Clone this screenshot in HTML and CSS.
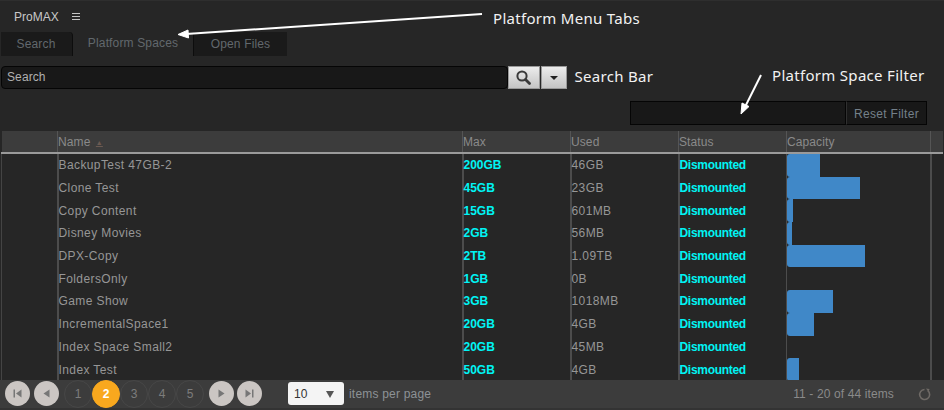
FILE: index.html
```html
<!DOCTYPE html>
<html lang="en">
<head>
    <meta charset="UTF-8">
    <title>ProMAX Platform Spaces</title>
    <link rel="stylesheet" href="styles.css">
</head>
<body>
    <div id="app">
        <div class="topbar">
            <span class="brand">ProMAX</span>
            <span class="menu-icon"><i></i><i></i><i></i></span>
        </div>
        <div class="tabs">
            <div class="tab tab-search">Search</div>
            <div class="tab tab-active">Platform Spaces</div>
            <div class="tab tab-files">Open Files</div>
        </div>
        <div class="searchbar">
            <div class="search-input">Search</div>
            <div class="light-btn btn-search">
                <svg width="17" height="17" viewBox="0 0 17 17"><circle cx="7" cy="7" r="4.6" fill="none" stroke="#3a3a3a" stroke-width="2"/><path d="M10.500 10.500l4 4" stroke="#3a3a3a" stroke-width="2.800" stroke-linecap="round"/></svg>
            </div>
            <div class="light-btn btn-drop"><span class="caret"></span></div>
            <span class="note note-search">Search Bar</span>
        </div>
        <div class="filterbar">
            <div class="filter-input"></div>
            <div class="filter-reset">Reset Filter</div>
        </div>
        <table class="grid">
            <colgroup>
                <col class="c-first"><col class="c-name"><col class="c-num"><col class="c-num"><col class="c-num"><col class="c-cap"><col>
            </colgroup>
            <thead>
                <tr><th></th><th>Name <span class="sort">▲</span></th><th>Max</th><th>Used</th><th>Status</th><th>Capacity</th><th></th></tr>
            </thead>
            <tbody>
                <tr><td></td><td>BackupTest 47GB-2</td><td class="hi">200GB</td><td>46GB</td><td class="hi st">Dismounted</td><td class="cap"><div class="bar" style="width:33px"></div></td><td></td></tr>
                <tr><td></td><td>Clone Test</td><td class="hi">45GB</td><td>23GB</td><td class="hi st">Dismounted</td><td class="cap"><div class="bar" style="width:73px"></div></td><td></td></tr>
                <tr><td></td><td>Copy Content</td><td class="hi">15GB</td><td>601MB</td><td class="hi st">Dismounted</td><td class="cap"><div class="bar" style="width:6px"></div></td><td></td></tr>
                <tr><td></td><td>Disney Movies</td><td class="hi">2GB</td><td>56MB</td><td class="hi st">Dismounted</td><td class="cap"><div class="bar" style="width:5px"></div></td><td></td></tr>
                <tr><td></td><td>DPX-Copy</td><td class="hi">2TB</td><td>1.09TB</td><td class="hi st">Dismounted</td><td class="cap"><div class="bar" style="width:78px"></div></td><td></td></tr>
                <tr><td></td><td>FoldersOnly</td><td class="hi">1GB</td><td>0B</td><td class="hi st">Dismounted</td><td class="cap"></td><td></td></tr>
                <tr><td></td><td>Game Show</td><td class="hi">3GB</td><td>1018MB</td><td class="hi st">Dismounted</td><td class="cap"><div class="bar" style="width:46px"></div></td><td></td></tr>
                <tr><td></td><td>IncrementalSpace1</td><td class="hi">20GB</td><td>4GB</td><td class="hi st">Dismounted</td><td class="cap"><div class="bar" style="width:27px"></div></td><td></td></tr>
                <tr><td></td><td>Index Space Small2</td><td class="hi">20GB</td><td>45MB</td><td class="hi st">Dismounted</td><td class="cap"></td><td></td></tr>
                <tr><td></td><td>Index Test</td><td class="hi">50GB</td><td>4GB</td><td class="hi st">Dismounted</td><td class="cap"><div class="bar" style="width:12px"></div></td><td></td></tr>
            </tbody>
        </table>
        <div class="pager">
            <div class="pg-btn"><svg width="11" height="11" viewBox="0 0 11 11"><path d="M1.500 1.500h1.500v8H1.500zM9.500 1.500v8L4 5.500z" fill="#777"/></svg></div>
            <div class="pg-btn"><svg width="11" height="11" viewBox="0 0 11 11"><path d="M8.500 1.500v8L2.500 5.500z" fill="#777"/></svg></div>
            <div class="pg-nums">
                <div class="pg-num">1</div>
                <div class="pg-num pg-current">2</div>
                <div class="pg-num">3</div>
                <div class="pg-num">4</div>
                <div class="pg-num">5</div>
            </div>
            <div class="pg-btn"><svg width="11" height="11" viewBox="0 0 11 11"><path d="M2.500 1.500v8L8.500 5.500z" fill="#777"/></svg></div>
            <div class="pg-btn pg-last"><svg width="11" height="11" viewBox="0 0 11 11"><path d="M1.500 1.500v8L7 5.500zM8 1.500h1.500v8H8z" fill="#777"/></svg></div>
            <div class="per-page"><span>10</span><span class="caret caret-grey"></span></div>
            <span class="per-label">items per page</span>
            <span class="pg-info">11 - 20 of 44 items</span>
            <svg class="refresh" width="13" height="13" viewBox="0 0 13 13"><path d="M9.800 2.600a5 5 0 1 1-3.300-1.100" fill="none" stroke="#6f6a66" stroke-width="1.600"/><path d="M8 0.500l3.500 0.500-1 3z" fill="#6f6a66"/></svg>
        </div>

        <span class="note note-tabs">Platform Menu Tabs</span>
        <span class="note note-filter">Platform Space Filter</span>
        <svg class="arrows" width="944" height="410" viewBox="0 0 944 410">
            <path d="M482 14L186 34" stroke="#fff" stroke-width="2"/>
            <path d="M178 34.500l10-4.500.5 8z" fill="#fff" stroke="#fff"/>
            <path d="M761 75L745 107" stroke="#fff" stroke-width="2"/>
            <path d="M741 114l1-11 7 3.500z" fill="#fff" stroke="#fff"/>
        </svg>
    </div>
</body>
</html>
```

FILE: styles.css
```css
* {
    box-sizing: border-box;
}
html, body {
    margin: 0;
    height: 100%;
}
body {
    background-color: #fff;
    font-family: "Liberation Sans", Arial, sans-serif;
    font-size: 12px;
    overflow: hidden;
}
#app {
    position: relative;
    width: 944px;
    height: 410px;
    background-color: #262626;
    border-top: 1px solid #2e2e2e;
    border-bottom: 2px solid #333;
    color: #8a8a8a;
}

/* top */
.topbar {
    display: flex;
    align-items: center;
    height: 31px;
    padding: 0 0 0 14px;
    color: #c8c8c8;
}
.brand {
    font-size: 12px;
}
.menu-icon {
    display: flex;
    flex-direction: column;
    gap: 1.5px;
    margin-left: 13.500px;
    width: 7.500px;
}
.menu-icon i {
    display: block;
    height: 1.500px;
    background-color: #c4c4c4;
}
.tabs {
    display: flex;
    height: 24px;
    margin-left: 1px;
}
.tab {
    font-size: 12px;
    letter-spacing: 0.15px;
    color: #62686d;
    text-align: center;
    line-height: 24px;
    background-color: #1a1a1a;
}
.tab-search {
    width: 72px;
    border-right: 1px solid #0d0d0d;
    border-radius: 0 4px 0 0;
    padding-right: 1px;
}
.tab-active {
    width: 120px;
    background-color: #262626;
    line-height: 22px;
}
.tab-files {
    width: 94px;
    border-left: 1px solid #0d0d0d;
    border-radius: 4px 0 0 0;
}
.searchbar {
    display: flex;
    align-items: stretch;
    height: 23px;
    margin-top: 10px;
    padding-left: 1px;
}
.search-input {
    width: 507px;
    background-color: #181818;
    border: 1px solid #050505;
    border-radius: 4px;
    padding-left: 5px;
    line-height: 21px;
    letter-spacing: 0.1px;
    color: #b0b0b0;
}
.light-btn {
    display: flex;
    align-items: center;
    justify-content: center;
    background: linear-gradient(#ececec, #c4c4c4);
    border: 1px solid #999;
    height: 23px;
}
.btn-search {
    width: 31.500px;
}
.btn-drop {
    width: 26px;
    margin-left: 1px;
}
.caret {
    display: block;
    width: 0;
    height: 0;
    border-left: 4px solid transparent;
    border-right: 4px solid transparent;
    border-top: 4px solid #222;
}
.note {
    font-family: "Noto Sans", "Open Sans", sans-serif;
    font-size: 15px;
    letter-spacing: 0.3px;
    color: #f2f2f2;
    white-space: nowrap;
}
.note-search {
    margin-left: 8px;
    line-height: 20px;
}
.note-tabs {
    position: absolute;
    left: 493px;
    top: 7px;
}
.note-filter {
    position: absolute;
    left: 772px;
    top: 64px;
}
.arrows {
    position: absolute;
    left: 0;
    top: -1px;
    pointer-events: none;
}
.filterbar {
    display: flex;
    justify-content: flex-end;
    height: 24px;
    margin-top: 12px;
    padding-right: 17px;
}
.filter-input {
    width: 216px;
    background-color: #181818;
    border: 1px solid #050505;
}
.filter-reset {
    width: 81px;
    background-color: #181818;
    border: 1px solid #050505;
    border-left: 1px solid #303030;
    color: #74808a;
    text-align: center;
    line-height: 24px;
    letter-spacing: 0.3px;
}

/* grid */
.grid {
    width: 942px;
    margin: 6px 0 0 1px;
    border-collapse: collapse;
    table-layout: fixed;
}
.c-first {
    width: 56px;
}
.c-name {
    width: 405px;
}
.c-num {
    width: 108px;
}
.c-cap {
    width: 144px;
}
.grid th {
    height: 22px;
    padding: 0;
    background-color: #3c3c3c;
    border-left: 1px solid #555;
    border-bottom: 2px solid #9a9a9a;
    color: #8a8a8a;
    font-weight: normal;
    text-align: left;
    letter-spacing: 0.1px;
}
.grid th:first-child {
    border-left: none;
}
.sort {
    font-size: 7px;
    color: #6b5a52;
    text-decoration: underline;
    vertical-align: middle;
    margin-left: 2px;
}
.grid td {
    height: 22.7px;
    padding: 0;
    border-left: 2px solid #4c4c4c;
    color: #969696;
    white-space: nowrap;
    letter-spacing: 0.4px;
}
.grid td:first-child {
    border-left: 1px solid #444;
}
.grid td.hi {
    color: #00f4f4;
    font-weight: bold;
    letter-spacing: 0;
}
.grid td.st {
    letter-spacing: -0.3px;
}
.grid td.cap {
    padding: 0;
    vertical-align: top;
    border-left-width: 1px;
}
.bar {
    height: 22.7px;
    background-color: #4088c8;
    border-radius: 3px 0 0 3px;
}

/* pager */
.pager {
    display: flex;
    align-items: center;
    height: 28px;
    padding-left: 5px;
    background-color: #3c3c3c;
    margin-top: -1px;
}
.pg-btn {
    display: flex;
    align-items: center;
    justify-content: center;
    width: 25px;
    height: 25px;
    margin-right: 4px;
    border-radius: 50%;
    background-color: #cbc6c3;
}
.pg-last {
    margin-left: -1px;
}
.pg-nums {
    display: flex;
    margin: 0 5px 0 1px;
}
.pg-num {
    width: 28px;
    height: 28px;
    border: 1px solid #474747;
    border-radius: 50%;
    color: #7c7c7c;
    text-align: center;
    line-height: 26px;
}
.pg-current {
    background-color: #f9a81e;
    border-color: #f9a81e;
    color: #fff;
    font-weight: bold;
}
.per-page {
    display: flex;
    align-items: center;
    justify-content: space-between;
    width: 56px;
    height: 23px;
    margin-left: 22px;
    padding: 1px 10px 0 6px;
    background-color: #f4f4f4;
    border-radius: 3px;
    color: #333;
}
.caret-grey {
    border-top: 7px solid #555;
    border-left-width: 4px;
    border-right-width: 4px;
}
.per-label {
    margin-left: 5px;
    color: #8d9296;
    letter-spacing: 0.2px;
}
.pg-info {
    margin-left: auto;
    color: #8a8a8a;
    letter-spacing: 0.12px;
}
.refresh {
    margin: 2px 13px 0 24px;
}
```
